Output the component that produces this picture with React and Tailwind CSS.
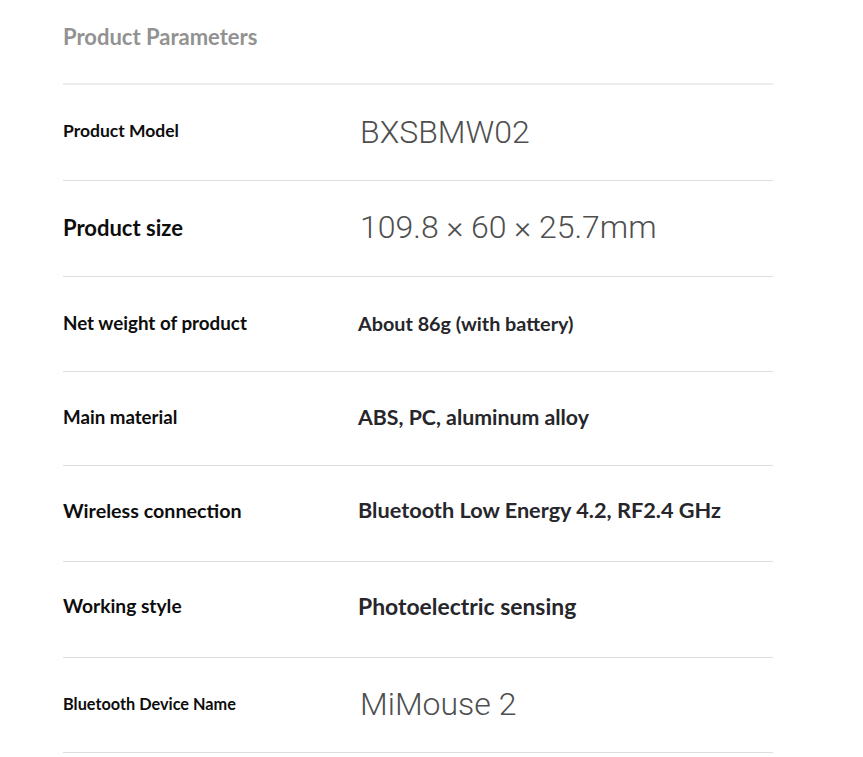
import React from 'react';

const rows = [
  { label: 'Product Model', labelSize: 'text-[17.5px]', value: 'BXSBMW02', light: true, valueSize: 'text-[32px]', h: 'h-[96px] pb-[2px]' },
  { label: 'Product size', labelSize: 'text-[22px]', value: '109.8 × 60 × 25.7mm', light: true, valueSize: 'text-[32px]', h: 'h-[96px] pb-[3px]' },
  { label: 'Net weight of product', labelSize: 'text-[18.8px]', value: 'About 86g (with battery)', valueSize: 'text-[19.8px]', h: 'h-[95px] pb-[1px]' },
  { label: 'Main material', labelSize: 'text-[18.7px]', value: 'ABS, PC, aluminum alloy', valueSize: 'text-[21.3px]', h: 'h-[94px] pb-[2px]' },
  { label: 'Wireless connection', labelSize: 'text-[19.7px]', value: 'Bluetooth Low Energy 4.2, RF2.4 GHz', valueSize: 'text-[21.7px]', h: 'h-[96px] pb-[6px]' },
  { label: 'Working style', labelSize: 'text-[19.2px]', value: 'Photoelectric sensing', valueSize: 'text-[22.9px]', h: 'h-[96px] pb-[6px]' },
  { label: 'Bluetooth Device Name', labelSize: 'text-[16.3px]', value: 'MiMouse 2', light: true, valueSize: 'text-[32px]', h: 'h-[95px] pb-[2px]' },
];

const App = () => {
  return (
    <div className="min-h-screen bg-white px-[63px]">
      <div className="w-[710px]">
        <div className="h-[85px] pt-[26px] border-b-2 border-[#ececec]">
          <h2 className="font-['Lato',sans-serif] font-bold text-[22px] leading-none text-[#929292]">
            Product Parameters
          </h2>
        </div>

        {rows.map((row, i) => (
          <div key={i} className={`${row.h} flex items-center border-b border-[#dedede]`}>
            <div className={`w-[295px] font-['Lato',sans-serif] font-bold text-[#0d0d0d] ${row.labelSize}`}>
              {row.label}
            </div>
            <div
              className={
                row.light
                  ? `ml-[2px] font-['Roboto',sans-serif] font-light text-[#4f4f4f] ${row.valueSize}`
                  : `font-['Lato',sans-serif] font-bold text-[#26262b] ${row.valueSize}`
              }
            >
              {row.value}
            </div>
          </div>
        ))}
      </div>
    </div>
  );
};

export default App;
